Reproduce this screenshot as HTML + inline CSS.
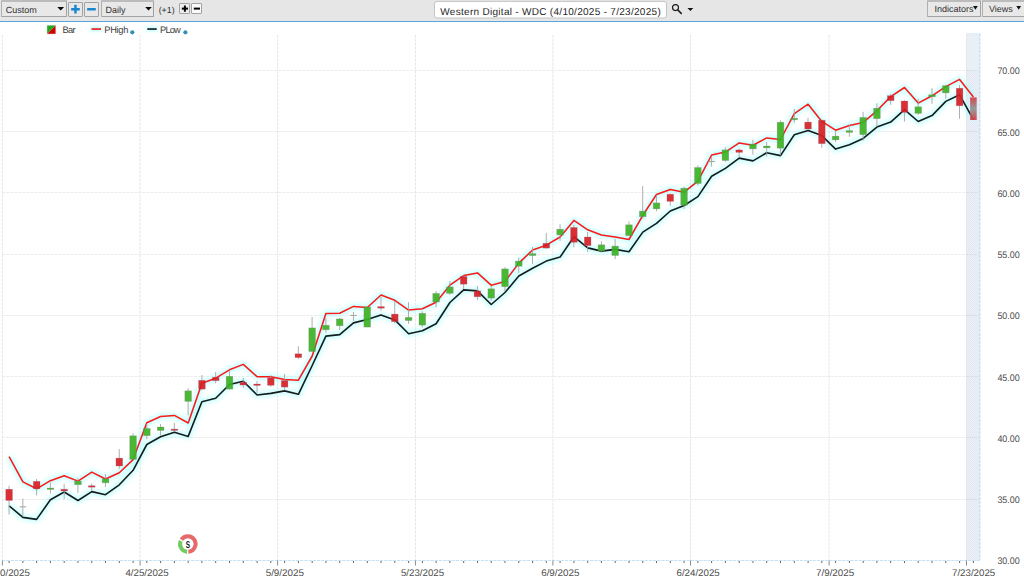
<!DOCTYPE html>
<html lang="en"><head><meta charset="utf-8"><title>Western Digital - WDC</title>
<style>
html,body{margin:0;padding:0;background:#fff;}
body{width:1024px;height:581px;overflow:hidden;position:relative;font-family:"Liberation Sans",sans-serif;color:#444;}
#toolbar{position:absolute;left:0;top:0;width:1024px;height:21px;background:#e6e6e6;border-bottom:1px solid #5ba3db;box-sizing:content-box;}
.box{position:absolute;box-sizing:border-box;border:1px solid #a3a3a3;background:#e8e8e8;border-radius:1px;}
.dd{border-top:2px solid #bcbcbc;border-left:1px solid #b0b0b0;}
.lbl{position:absolute;white-space:nowrap;text-rendering:geometricPrecision;font-size:9px;line-height:12px;color:#303030;}
#title{position:absolute;left:433px;top:0;}
#chart{position:absolute;left:0;top:0;}
svg text{font-family:"Liberation Sans",sans-serif;text-rendering:geometricPrecision;}
</style></head><body>
<div id="toolbar">
 <div class="box dd" style="left:1px;top:0;width:66px;height:17px"></div>
 <div class="lbl" style="left:5.8px;top:4px;">Custom</div>
 <div class="box" style="left:68px;top:2px;width:15px;height:15px"></div>
 <div class="box" style="left:84px;top:2px;width:15px;height:15px"></div>
 <div class="box dd" style="left:101px;top:0;width:53px;height:17px"></div>
 <div class="lbl" style="left:105.6px;top:4px;">Daily</div>
 <div class="lbl" style="left:158.7px;top:3.8px;font-size:8.8px">(+1)</div>
 <div class="box" style="left:179px;top:3px;width:11px;height:11px;background:#ededed"></div>
 <div class="box" style="left:191px;top:3px;width:11px;height:11px;background:#fafafa"></div>
 <svg id="title" width="240" height="21" viewBox="0 0 240 21"><rect x="1.5" y="1.4" width="232" height="16.6" rx="2.5" fill="#fff" stroke="#c4c4c4" stroke-width="1"/></svg>
 <div class="lbl" style="left:440.3px;top:6.5px;font-size:10px;letter-spacing:0.29px;color:#262626" id="ttxt">Western Digital - WDC (4/10/2025 - 7/23/2025)</div>
 <div class="box dd" style="left:927px;top:0;width:54px;height:17px"></div>
 <div class="lbl" style="left:934.5px;top:2.5px;">Indicators</div>
 <div class="box dd" style="left:982px;top:0;width:46px;height:17px"></div>
 <div class="lbl" style="left:989px;top:2.5px;">Views</div>
</div>

<svg id="chart" width="1024" height="581" viewBox="0 0 1024 581">
<defs>
<filter id="glow" x="-5%" y="-5%" width="110%" height="110%"><feGaussianBlur stdDeviation="2"/></filter>
<filter id="glow2" x="-30%" y="-100%" width="160%" height="300%"><feGaussianBlur stdDeviation="1.5"/></filter>
<linearGradient id="last" x1="0" y1="0" x2="0" y2="1"><stop offset="0" stop-color="#d63a42"/><stop offset="0.5" stop-color="#8f9494"/><stop offset="1" stop-color="#d63a42"/></linearGradient>
<pattern id="hatch" width="2" height="2" patternUnits="userSpaceOnUse"><rect width="2" height="2" fill="#ebf0f8"/><rect width="1" height="1" fill="#e3e9f3"/><rect x="1" y="1" width="1" height="1" fill="#e3e9f3"/></pattern>
</defs>
<g fill="#1c86cc"><rect x="71.1" y="7.9" width="8.7" height="2.5" rx="0.5"/><rect x="74.2" y="4.8" width="2.5" height="8.7" rx="0.5"/><rect x="87.1" y="7.9" width="8.7" height="2.5" rx="0.5"/></g>
<g fill="#000"><rect x="181.8" y="7.6" width="6.2" height="2"/><rect x="183.9" y="5.5" width="2" height="6.2"/><rect x="193.8" y="7.6" width="6.2" height="2"/></g>
<g fill="none" stroke="#1a1a1a" stroke-width="1.15"><circle cx="675.5" cy="7.6" r="3"/><path d="M677.7 9.9 L681.7 13.9" stroke-width="1.5"/></g>
<path d="M687.5 8.1 h5.8 l-2.9 3 z" fill="#111"/>
<path d="M973 6.1 h4.8 l-2.4 3.6 z M1016.3 6.1 h4.8 l-2.4 3.6 z" fill="#111"/>
<path d="M57.3 6.9 h6.8 l-3.4 3.6 z M145.2 6.9 h6.6 l-3.3 3.6 z" fill="#0a0a0a"/>
<g><path d="M47 25.2 h8.8 L47 34 z" fill="#1faa1f"/><path d="M55.8 25.2 v8.8 H47 z" fill="#d40000"/><rect x="47" y="25.2" width="8.8" height="8.8" fill="none" stroke="#ccc" stroke-width="0.5"/></g>
<text x="62.5" y="32.8" font-size="9.3" fill="#3c3c3c" textLength="13">Bar</text>
<g filter="url(#glow2)" fill="#9ff" opacity="0.7"><rect x="90.5" y="27" width="11.5" height="4.2"/><rect x="146.3" y="27" width="11.4" height="4.2"/></g>
<path d="M91.5 29.05 H101" stroke="#f52a2a" stroke-width="1.8"/>
<path d="M147.3 29.05 H156.7" stroke="#263030" stroke-width="1.8"/>
<text x="104.3" y="32.8" font-size="9.3" fill="#3c3c3c" textLength="24">PHigh</text>
<text x="160" y="32.8" font-size="9.3" fill="#3c3c3c" textLength="20.8">PLow</text>
<circle cx="132.3" cy="32.3" r="2.1" fill="#3390b4"/><circle cx="185.4" cy="32.3" r="2.1" fill="#3390b4"/>
<rect x="966" y="33.5" width="14" height="37.5" fill="#e9eff7"/>
<rect x="966" y="71" width="14" height="489.5" fill="url(#hatch)"/>
<path d="M2 499.5 H980 M2 437.5 H980 M2 376.5 H980 M2 315.5 H980 M2 254.5 H980 M2 192.5 H980 M2 131.5 H980 M2 70.5 H980" stroke="#ececec" stroke-width="1" stroke-dasharray="3 1" fill="none"/>
<path d="M2.4 34.8 V560 M140.1 34.8 V560 M277.6 34.8 V560 M415.4 34.8 V560 M552.9 34.8 V560 M690.5 34.8 V560 M829.1 34.8 V560 M966.5 34.8 V560" stroke="#e6e6e6" stroke-width="1" stroke-dasharray="3 1" fill="none"/>
<path d="M979.9 33.6 V560" stroke="#c6dcf1" stroke-width="1.2" stroke-dasharray="3 1.1" fill="none"/>
<path d="M966.5 33.6 H980" stroke="#dde8f4" stroke-width="1" stroke-dasharray="3 1" fill="none"/>
<path d="M966 499.5 H979 M966 437.5 H979 M966 376.5 H979 M966 315.5 H979 M966 254.5 H979 M966 192.5 H979 M966 131.5 H979 M966 70.5 H979" stroke="#d9dee6" stroke-width="1" stroke-dasharray="3 1" fill="none"/>
<path d="M2 560.5 H980.5" stroke="#c6e2f7" stroke-width="1" stroke-dasharray="3.3 0.9" fill="none"/>
<path d="M9.1 561 v2 M22.9 561 v2 M36.6 561 v2 M50.4 561 v2 M64.2 561 v2 M78.0 561 v2 M91.8 561 v2 M105.5 561 v2 M119.3 561 v2 M133.1 561 v2 M146.8 561 v2 M160.6 561 v2 M174.4 561 v2 M188.2 561 v2 M201.9 561 v2 M215.7 561 v2 M229.5 561 v2 M243.3 561 v2 M257.1 561 v2 M270.8 561 v2 M284.6 561 v2 M298.4 561 v2 M312.2 561 v2 M325.9 561 v2 M339.7 561 v2 M353.5 561 v2 M367.3 561 v2 M381.0 561 v2 M394.8 561 v2 M408.6 561 v2 M422.4 561 v2 M436.1 561 v2 M449.9 561 v2 M463.7 561 v2 M477.5 561 v2 M491.2 561 v2 M505.0 561 v2 M518.8 561 v2 M532.6 561 v2 M546.3 561 v2 M560.1 561 v2 M573.9 561 v2 M587.7 561 v2 M601.4 561 v2 M615.2 561 v2 M629.0 561 v2 M642.8 561 v2 M656.5 561 v2 M670.3 561 v2 M684.1 561 v2 M697.9 561 v2 M711.6 561 v2 M725.4 561 v2 M739.2 561 v2 M753.0 561 v2 M766.7 561 v2 M780.5 561 v2 M794.3 561 v2 M808.1 561 v2 M821.8 561 v2 M835.6 561 v2 M849.4 561 v2 M863.2 561 v2 M876.9 561 v2 M890.7 561 v2 M904.5 561 v2 M918.2 561 v2 M932.0 561 v2 M945.8 561 v2 M959.6 561 v2 M973.4 561 v2" stroke="#666" stroke-width="1" fill="none"/>
<path d="M2.4 560.5 v5 M140.1 560.5 v5 M277.6 560.5 v5 M415.4 560.5 v5 M552.9 560.5 v5 M690.5 560.5 v5 M829.1 560.5 v5 M966.5 560.5 v5" stroke="#8a8a8a" stroke-width="1" fill="none"/>
<text x="997.4" y="564.1" font-size="9.5" fill="#4c4c4c" textLength="22.4" lengthAdjust="spacingAndGlyphs">30.00</text>
<text x="997.4" y="503.1" font-size="9.5" fill="#4c4c4c" textLength="22.4" lengthAdjust="spacingAndGlyphs">35.00</text>
<text x="997.4" y="442.1" font-size="9.5" fill="#4c4c4c" textLength="22.4" lengthAdjust="spacingAndGlyphs">40.00</text>
<text x="997.4" y="381.1" font-size="9.5" fill="#4c4c4c" textLength="22.4" lengthAdjust="spacingAndGlyphs">45.00</text>
<text x="997.4" y="319.1" font-size="9.5" fill="#4c4c4c" textLength="22.4" lengthAdjust="spacingAndGlyphs">50.00</text>
<text x="997.4" y="258.1" font-size="9.5" fill="#4c4c4c" textLength="22.4" lengthAdjust="spacingAndGlyphs">55.00</text>
<text x="997.4" y="197.1" font-size="9.5" fill="#4c4c4c" textLength="22.4" lengthAdjust="spacingAndGlyphs">60.00</text>
<text x="997.4" y="136.1" font-size="9.5" fill="#4c4c4c" textLength="22.4" lengthAdjust="spacingAndGlyphs">65.00</text>
<text x="997.4" y="74.1" font-size="9.5" fill="#4c4c4c" textLength="22.4" lengthAdjust="spacingAndGlyphs">70.00</text>
<text x="-13.4" y="575.7" font-size="9.6" fill="#4c4c4c" textLength="43.2" lengthAdjust="spacingAndGlyphs">4/10/2025</text>
<text x="125.4" y="575.7" font-size="9.6" fill="#4c4c4c" textLength="43.2" lengthAdjust="spacingAndGlyphs">4/25/2025</text>
<text x="265.7" y="575.7" font-size="9.6" fill="#4c4c4c" textLength="38.2" lengthAdjust="spacingAndGlyphs">5/9/2025</text>
<text x="400.9" y="575.7" font-size="9.6" fill="#4c4c4c" textLength="43.2" lengthAdjust="spacingAndGlyphs">5/23/2025</text>
<text x="541.2" y="575.7" font-size="9.6" fill="#4c4c4c" textLength="38.2" lengthAdjust="spacingAndGlyphs">6/9/2025</text>
<text x="676.5" y="575.7" font-size="9.6" fill="#4c4c4c" textLength="43.2" lengthAdjust="spacingAndGlyphs">6/24/2025</text>
<text x="816.0" y="575.7" font-size="9.6" fill="#4c4c4c" textLength="38.2" lengthAdjust="spacingAndGlyphs">7/9/2025</text>
<text x="952.0" y="575.7" font-size="9.6" fill="#4c4c4c" textLength="43.2" lengthAdjust="spacingAndGlyphs">7/23/2025</text>
<g filter="url(#glow)" fill="none" stroke="#9ff" stroke-width="6" opacity="0.52" stroke-linejoin="round"><polyline points="9.1,456.7 22.9,481.9 36.6,488.8 50.4,480.7 64.2,475.7 78.0,481.1 91.8,472.1 105.5,479.0 119.3,472.8 133.1,459.6 146.8,422.7 160.6,416.5 174.4,415.4 188.2,423.0 201.9,383.2 215.7,378.2 229.5,369.8 243.3,364.4 257.1,376.7 270.8,376.7 284.6,379.6 298.4,380.2 312.2,356.0 325.9,313.6 339.7,313.2 353.5,306.4 367.3,307.5 381.0,295.0 394.8,300.3 408.6,310.1 422.4,308.7 436.1,302.2 449.9,285.2 463.7,275.6 477.5,272.9 491.2,285.2 505.0,281.5 518.8,263.1 532.6,250.0 546.3,245.2 560.1,237.0 573.9,220.4 587.7,229.8 601.4,234.9 615.2,237.1 629.0,239.5 642.8,215.3 656.5,194.5 670.3,189.4 684.1,192.2 697.9,181.1 711.6,155.0 725.4,152.1 739.2,142.9 753.0,145.2 766.7,137.9 780.5,139.5 794.3,113.6 808.1,104.2 821.8,121.4 835.6,130.2 849.4,125.5 863.2,122.4 876.9,110.8 890.7,96.6 904.5,87.5 918.2,103.1 932.0,95.8 945.8,86.6 959.6,79.4 973.4,97.0"/><polyline points="9.1,505.8 22.9,517.4 36.6,519.4 50.4,499.8 64.2,492.0 78.0,500.5 91.8,491.6 105.5,494.7 119.3,484.8 133.1,470.3 146.8,444.5 160.6,436.8 174.4,432.3 188.2,436.4 201.9,401.7 215.7,398.3 229.5,384.5 243.3,381.3 257.1,395.0 270.8,393.4 284.6,390.9 298.4,394.3 312.2,365.5 325.9,336.1 339.7,334.6 353.5,322.9 367.3,319.5 381.0,314.9 394.8,319.9 408.6,333.8 422.4,330.8 436.1,323.8 449.9,302.5 463.7,289.9 477.5,290.9 491.2,304.5 505.0,292.5 518.8,276.0 532.6,268.2 546.3,261.1 560.1,257.1 573.9,236.7 587.7,247.9 601.4,251.1 615.2,249.4 629.0,251.8 642.8,232.1 656.5,223.3 670.3,211.0 684.1,205.5 697.9,196.6 711.6,176.2 725.4,168.4 739.2,158.1 753.0,160.9 766.7,152.7 780.5,155.6 794.3,134.8 808.1,130.4 821.8,135.6 835.6,149.1 849.4,144.7 863.2,138.4 876.9,127.1 890.7,122.1 904.5,109.7 918.2,121.5 932.0,115.6 945.8,101.4 959.6,94.8 973.4,119.6"/></g>
<polyline points="9.1,456.7 22.9,481.9 36.6,488.8 50.4,480.7 64.2,475.7 78.0,481.1 91.8,472.1 105.5,479.0 119.3,472.8 133.1,459.6 146.8,422.7 160.6,416.5 174.4,415.4 188.2,423.0 201.9,383.2 215.7,378.2 229.5,369.8 243.3,364.4 257.1,376.7 270.8,376.7 284.6,379.6 298.4,380.2 312.2,356.0 325.9,313.6 339.7,313.2 353.5,306.4 367.3,307.5 381.0,295.0 394.8,300.3 408.6,310.1 422.4,308.7 436.1,302.2 449.9,285.2 463.7,275.6 477.5,272.9 491.2,285.2 505.0,281.5 518.8,263.1 532.6,250.0 546.3,245.2 560.1,237.0 573.9,220.4 587.7,229.8 601.4,234.9 615.2,237.1 629.0,239.5 642.8,215.3 656.5,194.5 670.3,189.4 684.1,192.2 697.9,181.1 711.6,155.0 725.4,152.1 739.2,142.9 753.0,145.2 766.7,137.9 780.5,139.5 794.3,113.6 808.1,104.2 821.8,121.4 835.6,130.2 849.4,125.5 863.2,122.4 876.9,110.8 890.7,96.6 904.5,87.5 918.2,103.1 932.0,95.8 945.8,86.6 959.6,79.4 973.4,97.0" fill="none" stroke="#fc1a1a" stroke-width="1.55" stroke-linejoin="round"/>
<polyline points="9.1,505.8 22.9,517.4 36.6,519.4 50.4,499.8 64.2,492.0 78.0,500.5 91.8,491.6 105.5,494.7 119.3,484.8 133.1,470.3 146.8,444.5 160.6,436.8 174.4,432.3 188.2,436.4 201.9,401.7 215.7,398.3 229.5,384.5 243.3,381.3 257.1,395.0 270.8,393.4 284.6,390.9 298.4,394.3 312.2,365.5 325.9,336.1 339.7,334.6 353.5,322.9 367.3,319.5 381.0,314.9 394.8,319.9 408.6,333.8 422.4,330.8 436.1,323.8 449.9,302.5 463.7,289.9 477.5,290.9 491.2,304.5 505.0,292.5 518.8,276.0 532.6,268.2 546.3,261.1 560.1,257.1 573.9,236.7 587.7,247.9 601.4,251.1 615.2,249.4 629.0,251.8 642.8,232.1 656.5,223.3 670.3,211.0 684.1,205.5 697.9,196.6 711.6,176.2 725.4,168.4 739.2,158.1 753.0,160.9 766.7,152.7 780.5,155.6 794.3,134.8 808.1,130.4 821.8,135.6 835.6,149.1 849.4,144.7 863.2,138.4 876.9,127.1 890.7,122.1 904.5,109.7 918.2,121.5 932.0,115.6 945.8,101.4 959.6,94.8 973.4,119.6" fill="none" stroke="#161c1c" stroke-width="1.6" stroke-linejoin="round"/>
<g opacity="0.92">
<path d="M9.05 485.7 V514.6" stroke="#a2a2a2" stroke-width="0.95" fill="none"/>
<rect x="5.75" y="489.2" width="6.7" height="11.3" fill="#d81e23" stroke="#7a6a90" stroke-opacity="0.4" stroke-width="0.6"/>
<path d="M22.82 498.6 V516.5" stroke="#a2a2a2" stroke-width="0.95" fill="none"/>
<path d="M19.6 506.8 H26.2" stroke="#a0a0a0" stroke-width="1.1" fill="none"/>
<path d="M36.60 479.0 V495.5" stroke="#a2a2a2" stroke-width="0.95" fill="none"/>
<rect x="33.30" y="481.3" width="6.7" height="7.5" fill="#d81e23" stroke="#7a6a90" stroke-opacity="0.4" stroke-width="0.6"/>
<path d="M50.38 482.6 V493.6" stroke="#a2a2a2" stroke-width="0.95" fill="none"/>
<rect x="47.08" y="488.0" width="6.7" height="1.5" fill="#3cb222" stroke="#7a6a90" stroke-opacity="0.4" stroke-width="0.6"/>
<path d="M64.15 483.8 V499.1" stroke="#a2a2a2" stroke-width="0.95" fill="none"/>
<rect x="60.85" y="489.2" width="6.7" height="1.8" fill="#d81e23" stroke="#7a6a90" stroke-opacity="0.4" stroke-width="0.6"/>
<path d="M77.92 478.2 V492.9" stroke="#a2a2a2" stroke-width="0.95" fill="none"/>
<rect x="74.62" y="481.1" width="6.7" height="3.6" fill="#3cb222" stroke="#7a6a90" stroke-opacity="0.4" stroke-width="0.6"/>
<path d="M91.70 483.6 V490.7" stroke="#a2a2a2" stroke-width="0.95" fill="none"/>
<rect x="88.40" y="485.7" width="6.7" height="1.5" fill="#d81e23" stroke="#7a6a90" stroke-opacity="0.4" stroke-width="0.6"/>
<path d="M105.47 474.1 V487.0" stroke="#a2a2a2" stroke-width="0.95" fill="none"/>
<rect x="102.17" y="478.8" width="6.7" height="4.0" fill="#3cb222" stroke="#7a6a90" stroke-opacity="0.4" stroke-width="0.6"/>
<path d="M119.25 449.1 V468.8" stroke="#a2a2a2" stroke-width="0.95" fill="none"/>
<rect x="115.95" y="458.1" width="6.7" height="7.9" fill="#d81e23" stroke="#7a6a90" stroke-opacity="0.4" stroke-width="0.6"/>
<path d="M133.03 433.2 V459.4" stroke="#a2a2a2" stroke-width="0.95" fill="none"/>
<rect x="129.73" y="435.8" width="6.7" height="23.6" fill="#3cb222" stroke="#7a6a90" stroke-opacity="0.4" stroke-width="0.6"/>
<path d="M146.80 424.0 V439.1" stroke="#a2a2a2" stroke-width="0.95" fill="none"/>
<rect x="143.50" y="428.5" width="6.7" height="7.2" fill="#3cb222" stroke="#7a6a90" stroke-opacity="0.4" stroke-width="0.6"/>
<path d="M160.57 424.0 V435.8" stroke="#a2a2a2" stroke-width="0.95" fill="none"/>
<rect x="157.28" y="427.0" width="6.7" height="3.5" fill="#3cb222" stroke="#7a6a90" stroke-opacity="0.4" stroke-width="0.6"/>
<path d="M174.35 422.8 V431.4" stroke="#a2a2a2" stroke-width="0.95" fill="none"/>
<rect x="171.05" y="429.1" width="6.7" height="1.4" fill="#d81e23" stroke="#7a6a90" stroke-opacity="0.4" stroke-width="0.6"/>
<path d="M188.12 388.2 V415.3" stroke="#a2a2a2" stroke-width="0.95" fill="none"/>
<rect x="184.83" y="390.8" width="6.7" height="10.6" fill="#3cb222" stroke="#7a6a90" stroke-opacity="0.4" stroke-width="0.6"/>
<path d="M201.90 375.0 V390.1" stroke="#a2a2a2" stroke-width="0.95" fill="none"/>
<rect x="198.60" y="380.3" width="6.7" height="8.8" fill="#d81e23" stroke="#7a6a90" stroke-opacity="0.4" stroke-width="0.6"/>
<path d="M215.67 371.9 V383.2" stroke="#a2a2a2" stroke-width="0.95" fill="none"/>
<rect x="212.38" y="377.2" width="6.7" height="3.5" fill="#d81e23" stroke="#7a6a90" stroke-opacity="0.4" stroke-width="0.6"/>
<path d="M229.45 370.0 V389.5" stroke="#a2a2a2" stroke-width="0.95" fill="none"/>
<rect x="226.15" y="376.3" width="6.7" height="12.8" fill="#3cb222" stroke="#7a6a90" stroke-opacity="0.4" stroke-width="0.6"/>
<path d="M243.22 377.8 V387.8" stroke="#a2a2a2" stroke-width="0.95" fill="none"/>
<rect x="239.93" y="382.3" width="6.7" height="2.7" fill="#d81e23" stroke="#7a6a90" stroke-opacity="0.4" stroke-width="0.6"/>
<path d="M257.00 381.1 V392.8" stroke="#a2a2a2" stroke-width="0.95" fill="none"/>
<rect x="253.70" y="384.0" width="6.7" height="1.5" fill="#d81e23" stroke="#7a6a90" stroke-opacity="0.4" stroke-width="0.6"/>
<path d="M270.78 375.2 V386.8" stroke="#a2a2a2" stroke-width="0.95" fill="none"/>
<rect x="267.48" y="377.7" width="6.7" height="7.6" fill="#d81e23" stroke="#7a6a90" stroke-opacity="0.4" stroke-width="0.6"/>
<path d="M284.55 374.0 V390.3" stroke="#a2a2a2" stroke-width="0.95" fill="none"/>
<rect x="281.25" y="380.5" width="6.7" height="6.6" fill="#d81e23" stroke="#7a6a90" stroke-opacity="0.4" stroke-width="0.6"/>
<path d="M298.33 346.2 V359.0" stroke="#a2a2a2" stroke-width="0.95" fill="none"/>
<rect x="295.03" y="353.8" width="6.7" height="3.8" fill="#d81e23" stroke="#7a6a90" stroke-opacity="0.4" stroke-width="0.6"/>
<path d="M312.10 317.0 V351.5" stroke="#a2a2a2" stroke-width="0.95" fill="none"/>
<rect x="308.80" y="327.9" width="6.7" height="23.6" fill="#3cb222" stroke="#7a6a90" stroke-opacity="0.4" stroke-width="0.6"/>
<path d="M325.88 318.3 V332.7" stroke="#a2a2a2" stroke-width="0.95" fill="none"/>
<rect x="322.57" y="325.2" width="6.7" height="4.6" fill="#3cb222" stroke="#7a6a90" stroke-opacity="0.4" stroke-width="0.6"/>
<path d="M339.65 317.9 V330.0" stroke="#a2a2a2" stroke-width="0.95" fill="none"/>
<rect x="336.35" y="318.9" width="6.7" height="6.9" fill="#3cb222" stroke="#7a6a90" stroke-opacity="0.4" stroke-width="0.6"/>
<path d="M353.43 312.0 V320.8" stroke="#a2a2a2" stroke-width="0.95" fill="none"/>
<path d="M350.2 315.5 H356.8" stroke="#a0a0a0" stroke-width="1.1" fill="none"/>
<path d="M367.20 306.9 V327.1" stroke="#a2a2a2" stroke-width="0.95" fill="none"/>
<rect x="363.90" y="306.9" width="6.7" height="20.2" fill="#3cb222" stroke="#7a6a90" stroke-opacity="0.4" stroke-width="0.6"/>
<path d="M380.98 296.9 V310.7" stroke="#a2a2a2" stroke-width="0.95" fill="none"/>
<rect x="377.68" y="306.6" width="6.7" height="1.6" fill="#d81e23" stroke="#7a6a90" stroke-opacity="0.4" stroke-width="0.6"/>
<path d="M394.75 301.1 V323.3" stroke="#a2a2a2" stroke-width="0.95" fill="none"/>
<rect x="391.45" y="314.1" width="6.7" height="7.6" fill="#d81e23" stroke="#7a6a90" stroke-opacity="0.4" stroke-width="0.6"/>
<path d="M408.53 302.2 V323.9" stroke="#a2a2a2" stroke-width="0.95" fill="none"/>
<rect x="405.23" y="317.3" width="6.7" height="3.3" fill="#3cb222" stroke="#7a6a90" stroke-opacity="0.4" stroke-width="0.6"/>
<path d="M422.30 311.4 V327.3" stroke="#a2a2a2" stroke-width="0.95" fill="none"/>
<rect x="419.00" y="313.3" width="6.7" height="11.8" fill="#3cb222" stroke="#7a6a90" stroke-opacity="0.4" stroke-width="0.6"/>
<path d="M436.08 291.1 V307.5" stroke="#a2a2a2" stroke-width="0.95" fill="none"/>
<rect x="432.78" y="293.4" width="6.7" height="8.6" fill="#3cb222" stroke="#7a6a90" stroke-opacity="0.4" stroke-width="0.6"/>
<path d="M449.85 281.1 V294.9" stroke="#a2a2a2" stroke-width="0.95" fill="none"/>
<rect x="446.55" y="286.9" width="6.7" height="6.5" fill="#3cb222" stroke="#7a6a90" stroke-opacity="0.4" stroke-width="0.6"/>
<path d="M463.62 275.6 V289.0" stroke="#a2a2a2" stroke-width="0.95" fill="none"/>
<rect x="460.32" y="276.4" width="6.7" height="7.8" fill="#d81e23" stroke="#7a6a90" stroke-opacity="0.4" stroke-width="0.6"/>
<path d="M477.40 285.9 V300.3" stroke="#a2a2a2" stroke-width="0.95" fill="none"/>
<rect x="474.10" y="290.9" width="6.7" height="5.9" fill="#d81e23" stroke="#7a6a90" stroke-opacity="0.4" stroke-width="0.6"/>
<path d="M491.18 285.9 V300.9" stroke="#a2a2a2" stroke-width="0.95" fill="none"/>
<rect x="487.88" y="288.8" width="6.7" height="9.3" fill="#3cb222" stroke="#7a6a90" stroke-opacity="0.4" stroke-width="0.6"/>
<path d="M504.95 267.2 V291.5" stroke="#a2a2a2" stroke-width="0.95" fill="none"/>
<rect x="501.65" y="268.9" width="6.7" height="17.8" fill="#3cb222" stroke="#7a6a90" stroke-opacity="0.4" stroke-width="0.6"/>
<path d="M518.73 257.7 V272.8" stroke="#a2a2a2" stroke-width="0.95" fill="none"/>
<rect x="515.42" y="261.1" width="6.7" height="5.1" fill="#3cb222" stroke="#7a6a90" stroke-opacity="0.4" stroke-width="0.6"/>
<path d="M532.50 247.1 V263.8" stroke="#a2a2a2" stroke-width="0.95" fill="none"/>
<rect x="529.20" y="253.6" width="6.7" height="2.0" fill="#3cb222" stroke="#7a6a90" stroke-opacity="0.4" stroke-width="0.6"/>
<path d="M546.28 232.9 V248.5" stroke="#a2a2a2" stroke-width="0.95" fill="none"/>
<rect x="542.98" y="243.3" width="6.7" height="4.8" fill="#d81e23" stroke="#7a6a90" stroke-opacity="0.4" stroke-width="0.6"/>
<path d="M560.05 224.2 V240.8" stroke="#a2a2a2" stroke-width="0.95" fill="none"/>
<rect x="556.75" y="229.2" width="6.7" height="5.7" fill="#3cb222" stroke="#7a6a90" stroke-opacity="0.4" stroke-width="0.6"/>
<path d="M573.83 225.0 V247.4" stroke="#a2a2a2" stroke-width="0.95" fill="none"/>
<rect x="570.52" y="227.4" width="6.7" height="14.9" fill="#d81e23" stroke="#7a6a90" stroke-opacity="0.4" stroke-width="0.6"/>
<path d="M587.60 232.0 V251.8" stroke="#a2a2a2" stroke-width="0.95" fill="none"/>
<rect x="584.30" y="237.0" width="6.7" height="8.6" fill="#d81e23" stroke="#7a6a90" stroke-opacity="0.4" stroke-width="0.6"/>
<path d="M601.38 241.2 V252.6" stroke="#a2a2a2" stroke-width="0.95" fill="none"/>
<rect x="598.08" y="244.8" width="6.7" height="6.2" fill="#3cb222" stroke="#7a6a90" stroke-opacity="0.4" stroke-width="0.6"/>
<path d="M615.15 239.1 V259.2" stroke="#a2a2a2" stroke-width="0.95" fill="none"/>
<rect x="611.85" y="246.1" width="6.7" height="9.4" fill="#3cb222" stroke="#7a6a90" stroke-opacity="0.4" stroke-width="0.6"/>
<path d="M628.93 221.3 V236.0" stroke="#a2a2a2" stroke-width="0.95" fill="none"/>
<rect x="625.62" y="224.8" width="6.7" height="10.8" fill="#3cb222" stroke="#7a6a90" stroke-opacity="0.4" stroke-width="0.6"/>
<path d="M642.70 186.1 V218.7" stroke="#a2a2a2" stroke-width="0.95" fill="none"/>
<rect x="639.40" y="211.1" width="6.7" height="5.6" fill="#3cb222" stroke="#7a6a90" stroke-opacity="0.4" stroke-width="0.6"/>
<path d="M656.48 195.1 V211.2" stroke="#a2a2a2" stroke-width="0.95" fill="none"/>
<rect x="653.18" y="202.9" width="6.7" height="6.0" fill="#3cb222" stroke="#7a6a90" stroke-opacity="0.4" stroke-width="0.6"/>
<path d="M670.25 193.5 V205.8" stroke="#a2a2a2" stroke-width="0.95" fill="none"/>
<rect x="666.95" y="194.2" width="6.7" height="7.2" fill="#d81e23" stroke="#7a6a90" stroke-opacity="0.4" stroke-width="0.6"/>
<path d="M684.03 186.6 V208.7" stroke="#a2a2a2" stroke-width="0.95" fill="none"/>
<rect x="680.73" y="188.2" width="6.7" height="17.0" fill="#3cb222" stroke="#7a6a90" stroke-opacity="0.4" stroke-width="0.6"/>
<path d="M697.80 165.3 V185.5" stroke="#a2a2a2" stroke-width="0.95" fill="none"/>
<rect x="694.50" y="167.5" width="6.7" height="16.0" fill="#3cb222" stroke="#7a6a90" stroke-opacity="0.4" stroke-width="0.6"/>
<path d="M711.58 157.1 V166.5" stroke="#a2a2a2" stroke-width="0.95" fill="none"/>
<path d="M708.3 161.5 H714.9" stroke="#a0a0a0" stroke-width="1.1" fill="none"/>
<path d="M725.35 147.3 V161.7" stroke="#a2a2a2" stroke-width="0.95" fill="none"/>
<rect x="722.05" y="149.9" width="6.7" height="10.6" fill="#3cb222" stroke="#7a6a90" stroke-opacity="0.4" stroke-width="0.6"/>
<path d="M739.13 148.3 V157.1" stroke="#a2a2a2" stroke-width="0.95" fill="none"/>
<rect x="735.83" y="149.9" width="6.7" height="2.5" fill="#d81e23" stroke="#7a6a90" stroke-opacity="0.4" stroke-width="0.6"/>
<path d="M752.90 139.7 V154.6" stroke="#a2a2a2" stroke-width="0.95" fill="none"/>
<rect x="749.60" y="144.1" width="6.7" height="4.8" fill="#3cb222" stroke="#7a6a90" stroke-opacity="0.4" stroke-width="0.6"/>
<path d="M766.68 142.0 V156.5" stroke="#a2a2a2" stroke-width="0.95" fill="none"/>
<rect x="763.38" y="146.0" width="6.7" height="1.9" fill="#3cb222" stroke="#7a6a90" stroke-opacity="0.4" stroke-width="0.6"/>
<path d="M780.45 120.3 V155.2" stroke="#a2a2a2" stroke-width="0.95" fill="none"/>
<rect x="777.15" y="122.2" width="6.7" height="26.0" fill="#3cb222" stroke="#7a6a90" stroke-opacity="0.4" stroke-width="0.6"/>
<path d="M794.23 108.9 V122.7" stroke="#a2a2a2" stroke-width="0.95" fill="none"/>
<rect x="790.93" y="118.3" width="6.7" height="1.5" fill="#3cb222" stroke="#7a6a90" stroke-opacity="0.4" stroke-width="0.6"/>
<path d="M808.00 117.9 V130.0" stroke="#a2a2a2" stroke-width="0.95" fill="none"/>
<rect x="804.70" y="122.1" width="6.7" height="6.9" fill="#d81e23" stroke="#7a6a90" stroke-opacity="0.4" stroke-width="0.6"/>
<path d="M821.78 119.5 V147.8" stroke="#a2a2a2" stroke-width="0.95" fill="none"/>
<rect x="818.48" y="120.2" width="6.7" height="23.5" fill="#d81e23" stroke="#7a6a90" stroke-opacity="0.4" stroke-width="0.6"/>
<path d="M835.55 131.0 V142.2" stroke="#a2a2a2" stroke-width="0.95" fill="none"/>
<rect x="832.25" y="136.1" width="6.7" height="3.8" fill="#3cb222" stroke="#7a6a90" stroke-opacity="0.4" stroke-width="0.6"/>
<path d="M849.33 124.6 V136.8" stroke="#a2a2a2" stroke-width="0.95" fill="none"/>
<rect x="846.02" y="130.6" width="6.7" height="1.8" fill="#3cb222" stroke="#7a6a90" stroke-opacity="0.4" stroke-width="0.6"/>
<path d="M863.10 111.8 V140.5" stroke="#a2a2a2" stroke-width="0.95" fill="none"/>
<rect x="859.80" y="117.4" width="6.7" height="17.2" fill="#3cb222" stroke="#7a6a90" stroke-opacity="0.4" stroke-width="0.6"/>
<path d="M876.88 103.2 V126.5" stroke="#a2a2a2" stroke-width="0.95" fill="none"/>
<rect x="873.58" y="108.2" width="6.7" height="10.5" fill="#3cb222" stroke="#7a6a90" stroke-opacity="0.4" stroke-width="0.6"/>
<path d="M890.65 93.9 V104.8" stroke="#a2a2a2" stroke-width="0.95" fill="none"/>
<rect x="887.35" y="95.7" width="6.7" height="5.0" fill="#d81e23" stroke="#7a6a90" stroke-opacity="0.4" stroke-width="0.6"/>
<path d="M904.43 100.2 V121.6" stroke="#a2a2a2" stroke-width="0.95" fill="none"/>
<rect x="901.12" y="101.0" width="6.7" height="11.4" fill="#d81e23" stroke="#7a6a90" stroke-opacity="0.4" stroke-width="0.6"/>
<path d="M918.20 98.9 V114.9" stroke="#a2a2a2" stroke-width="0.95" fill="none"/>
<rect x="914.90" y="106.8" width="6.7" height="6.6" fill="#3cb222" stroke="#7a6a90" stroke-opacity="0.4" stroke-width="0.6"/>
<path d="M931.98 88.2 V103.9" stroke="#a2a2a2" stroke-width="0.95" fill="none"/>
<rect x="928.68" y="94.8" width="6.7" height="2.0" fill="#3cb222" stroke="#7a6a90" stroke-opacity="0.4" stroke-width="0.6"/>
<path d="M945.75 85.1 V98.5" stroke="#a2a2a2" stroke-width="0.95" fill="none"/>
<rect x="942.45" y="85.7" width="6.7" height="7.2" fill="#3cb222" stroke="#7a6a90" stroke-opacity="0.4" stroke-width="0.6"/>
<path d="M959.53 85.1 V118.8" stroke="#a2a2a2" stroke-width="0.95" fill="none"/>
<rect x="956.23" y="88.2" width="6.7" height="17.6" fill="#d81e23" stroke="#7a6a90" stroke-opacity="0.4" stroke-width="0.6"/>
<rect x="970.1" y="97.4" width="6.6" height="22.6" fill="url(#last)"/>
</g>
<path d="M181.37 539.67 A7.75 7.75 0 1 1 188.34 551.73" fill="none" stroke="#e66a6a" stroke-width="4"/>
<path d="M187.12 551.72 A7.75 7.75 0 0 1 180.72 540.85" fill="none" stroke="#75cc63" stroke-width="4"/>
<text x="185.7" y="547.9" font-size="10" font-weight="bold" fill="#222" textLength="4.3" lengthAdjust="spacingAndGlyphs">S</text>
</svg>
</body></html>
